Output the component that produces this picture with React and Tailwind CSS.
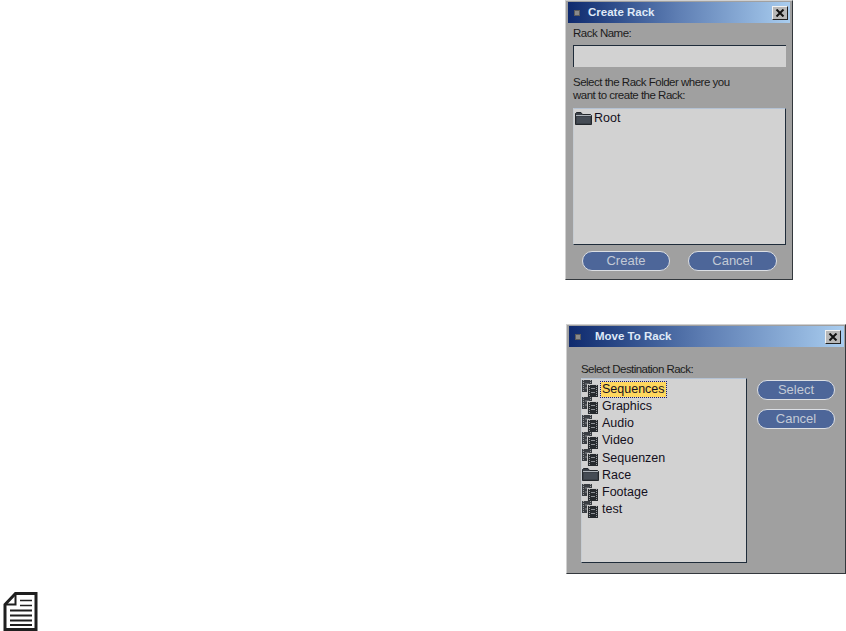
const sans = { fontFamily: '"Liberation Sans", Arial, sans-serif' };

function FolderIcon() {
  return (
    <svg width="17" height="13" viewBox="0 0 17 13" className="block shrink-0">
      <path d="M0.5 12.5V1.5L1.5 .5H6L7.5 2.5H15.5L16.5 3.5V12.5Z" fill="#3a4048" stroke="#23272c" />
      <path d="M1 3.5H16" stroke="#aeb4ba" strokeWidth="1" />
      <path d="M2 5H15V11H2Z" fill="#454c55" />
    </svg>
  );
}

function RackIcon() {
  return (
    <svg width="16" height="17" viewBox="0 0 16 17" className="block shrink-0">
      <rect x="0" y="0" width="10" height="12" fill="#3a3e43" />
      <path d="M1.5 0V12M8.5 0V12" stroke="#9a9da0" strokeDasharray="1 1" />
      <path d="M3 4H7M3 8H7" stroke="#85898e" />
      <rect x="5" y="4" width="11" height="13" fill="#c9c9c9" />
      <rect x="6" y="5" width="10" height="12" fill="#262a2e" />
      <path d="M7.5 5V17M14.5 5V17" stroke="#9a9da0" strokeDasharray="1 1" />
      <path d="M9 8.5H13M9 12.5H13" stroke="#8d9196" />
    </svg>
  );
}

function NoteIcon() {
  return (
    <svg width="35" height="39" viewBox="0 0 35 39" className="block">
      <path d="M12.5 1.5H33V37.5H2V12.5Z" fill="#fff" stroke="#1f1f1f" strokeWidth="3" />
      <path d="M12.5 2V12.5H2" fill="none" stroke="#1f1f1f" strokeWidth="2" />
      <path d="M17 8.5H29M17 13.5H29" stroke="#1f1f1f" strokeWidth="1.5" />
      <path d="M7 18.5H29M7 23.5H29M7 28.5H29M7 33H29" stroke="#1f1f1f" strokeWidth="2" />
    </svg>
  );
}

function TitleBar({ title, gap, rightPad }) {
  return (
    <div
      className="h-[21px] flex items-center bg-gradient-to-r from-[#0f2a6e] via-[#5f7fb4] to-[#a9cdef]"
      style={{ paddingRight: rightPad }}
    >
      <div className="w-[6px] h-[6px] ml-[6px] bg-[#8a8a8a] border border-[#5c5c5c] shrink-0" />
      <span className="text-[11.5px] font-bold text-[#dfe9f7] leading-none" style={{ marginLeft: gap }}>{title}</span>
      <div className="ml-auto w-[16px] h-[14px] bg-[#b8b8b8] border border-t-[#f2f2f2] border-l-[#f2f2f2] border-r-[#222] border-b-[#222] flex items-center justify-center">
        <svg width="10" height="8" viewBox="0 0 10 8"><path d="M1.5 0.5L8.5 7.5M8.5 0.5L1.5 7.5" stroke="#111" strokeWidth="2" /></svg>
      </div>
    </div>
  );
}

function Pill({ children, className }) {
  return (
    <div className={`h-[20px] pb-[2px] rounded-full bg-[#4d6699] border border-[#dcdfe4] flex items-center justify-center text-[13px] text-[#c3cad6] leading-none ${className}`}>
      {children}
    </div>
  );
}

const sunken = "bg-[#d2d2d2] border-t border-l border-r border-b border-t-[#b4c2d4] border-l-[#c6ccd2] border-r-[#1f2c3a] border-b-[#1f2c3a]";

function Row({ icon, label, selected }) {
  return (
    <div className="h-[17.25px] flex items-center">
      <div className="w-[19px] shrink-0 -mt-[1px]">{icon}</div>
      <span className={`text-[12.5px] leading-[15px] px-[1px] text-[#141020] ${selected ? "bg-[#ffd75e] outline outline-1 outline-dotted outline-[#1a1a6a]" : ""}`}>{label}</span>
    </div>
  );
}

export default function App() {
  const racks = [
    ["Sequences", <RackIcon />, true],
    ["Graphics", <RackIcon />],
    ["Audio", <RackIcon />],
    ["Video", <RackIcon />],
    ["Sequenzen", <RackIcon />],
    ["Race", <FolderIcon />],
    ["Footage", <RackIcon />],
    ["test", <RackIcon />],
  ];
  return (
    <div className="w-[846px] h-[631px] bg-white overflow-hidden" style={sans}>
      <div className="ml-[565px] w-[228px] h-[280px] bg-[#a0a0a0] border-t border-l border-r border-b border-t-[#d0d0d0] border-l-[#d0d0d0] border-r-[#33383d] border-b-[#33383d] pl-[2px] pr-[2px] pt-[1px] flex flex-col">
        <TitleBar title="Create Rack" gap="8px" rightPad="2px" />
        <div className="flex-1 pl-[5px] pr-[4px] flex flex-col">
          <div className="text-[11.5px] tracking-[-0.5px] leading-[14px] text-[#1c1c1c] mt-[3px]">Rack Name:</div>
          <div className="bg-[#d2d2d2] border-t border-l border-t-[#1f2c3a] border-l-[#1f2c3a] h-[22px] mt-[5px]" />
          <div className="text-[11.5px] tracking-[-0.5px] leading-[13px] text-[#1c1c1c] mt-[9px]">Select the Rack Folder where you<br />want to create the Rack:</div>
          <div className={`${sunken} h-[137px] mt-[6px] pl-[1px] pt-[2px]`}>
            <div className="flex items-center h-[15px]">
              <FolderIcon />
              <span className="text-[12.5px] ml-[2px] text-[#141020]">Root</span>
            </div>
          </div>
          <div className="flex mt-[6px] ml-[9px]">
            <Pill className="w-[88px]">Create</Pill>
            <Pill className="w-[89px] ml-[18px]">Cancel</Pill>
          </div>
        </div>
      </div>

      <div className="mt-[44px] ml-[566px] w-[280px] h-[250px] bg-[#a0a0a0] border-t border-l border-r border-b border-t-[#d0d0d0] border-l-[#d0d0d0] border-r-[#33383d] border-b-[#33383d] pl-[2px] pr-[1px] pt-[1px] flex flex-col">
        <TitleBar title="Move To Rack" gap="14px" rightPad="3px" />
        <div className="flex-1 pl-[12px] pt-[16px]">
          <div className="text-[11.5px] tracking-[-0.55px] leading-[13px] text-[#1c1c1c]">Select Destination Rack:</div>
          <div className="flex">
            <div className={`${sunken} w-[166px] h-[185px] mt-[2px] pt-[1.5px]`}>
              {racks.map(([label, icon, sel]) => (
                <Row key={label} label={label} icon={icon} selected={sel} />
              ))}
            </div>
            <div className="flex flex-col ml-[10px] mt-[4px]">
              <Pill className="w-[78px]">Select</Pill>
              <Pill className="w-[78px] mt-[9px]">Cancel</Pill>
            </div>
          </div>
        </div>
      </div>

      <div className="mt-[18px] ml-[3px]">
        <NoteIcon />
      </div>
    </div>
  );
}
